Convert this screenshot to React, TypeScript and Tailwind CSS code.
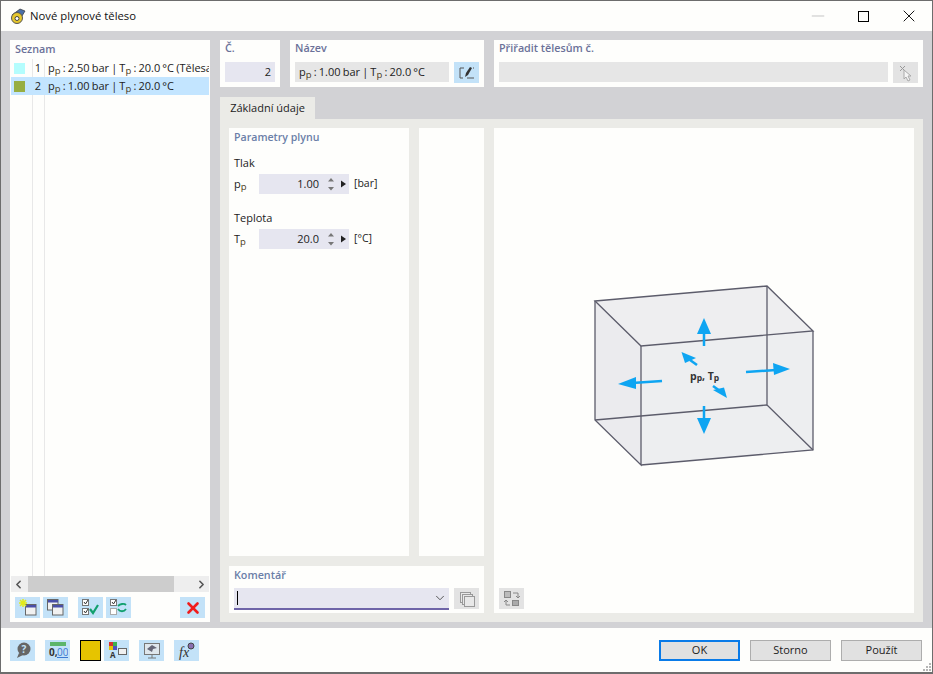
import { ChevronDown, ChevronLeft, ChevronRight, Minus, X } from "lucide-react"
import type { ReactNode } from "react"

const Sub = ({ children }: { children: ReactNode }) => (
  <span className="text-[9.5px] relative top-[2px] text-[#4a3a20]">{children}</span>
)

const IconBtn = ({ children, off }: { children: ReactNode; off?: boolean }) => (
  <div className={`w-[25px] h-[21px] flex items-center justify-center shrink-0 ${off ? "bg-[#e3e3e3]" : "bg-[#c3e2f8]"}`}>
    {children}
  </div>
)

const WinIcon = ({ x, y }: { x: number; y: number }) => (
  <g>
    <rect x={x + 0.5} y={y + 0.5} width="10.5" height="10.5" fill="#f1f1f1" stroke="#666" />
    <rect x={x + 1} y={y + 1} width="10" height="2.5" fill="#4a4fa8" />
  </g>
)

function Spinner({ value, unit }: { value: string; unit: string }) {
  return (
    <div className="flex items-center">
      <div className="w-[90px] h-5 bg-[#e6e6f0] flex items-center text-[#222]">
        <span className="flex-1 text-right text-[11px]">{value}</span>
        <svg width="30" height="20" viewBox="0 0 30 20" className="shrink-0">
          <path d="M9 7.5 12 4 15 7.5Z M9 13 12 16.5 15 13Z" fill="#777" />
          <path d="M22 6.5 27 10 22 13.5Z" fill="#222" />
        </svg>
      </div>
      <span className="ml-[5px] text-[10.5px] text-[#222]">{unit}</span>
    </div>
  )
}

function Arrow({ d, head }: { d: string; head: string }) {
  return (
    <g>
      <path d={d} stroke="#0ea5f2" strokeWidth="2.5" fill="none" />
      <path d={head} fill="#0ea5f2" />
    </g>
  )
}

function Box() {
  return (
    <svg width="250" height="200" viewBox="0 0 250 200">
      <path d="M15 26 187 11 233 56 61 71Z" fill="#eeeef0" />
      <path d="M15 26 61 71 61 190 15 145Z" fill="#ebebee" />
      <path d="M61 71 233 56 233 175 61 190Z" fill="#edeef0" />
      <g stroke="#5c5c6b" strokeWidth="1.3" fill="none">
        <path d="M15 26 187 11 233 56 61 71Z" />
        <path d="M15 26V145L61 190V71" />
        <path d="M61 190 233 175V56" />
        <path d="M187 11V130L233 175" />
        <path d="M15 145 187 130" />
      </g>
      <Arrow d="M124 71V56" head="M124 43 131 59H117Z" />
      <Arrow d="M124 131V146" head="M124 159 117 143H131Z" />
      <Arrow d="M82 106 52 108" head="M38 109 56 102 56 114Z" />
      <Arrow d="M166 97 196 95" head="M210 94 193 88 194 100Z" />
      <Arrow d="M110 85 117 90" head="M101.5 77 116 83 105 88Z" />
      <Arrow d="M133 111 140 116" head="M147 123 133 115 144 112.5Z" />
    </svg>
  )
}

export default function App() {
  return (
    <div
      className="w-[933px] h-[674px] bg-[#fefefc] border border-[#6d6d6d] border-b-[2px] flex flex-col text-[11px] text-[#222] overflow-hidden relative"
      style={{ fontFamily: '"Open Sans", "Noto Sans", sans-serif' }}
    >
      {/* title bar */}
      <div className="h-[30px] flex items-center shrink-0">
        <svg width="18" height="18" viewBox="0 0 18 18" className="ml-[8px] shrink-0">
          <path d="M3 8 11 2 16 4 13 9Z" fill="#4a6fa8" stroke="#333" strokeWidth="0.7" />
          <circle cx="8" cy="11" r="5.5" fill="#e5c62c" stroke="#555" />
          <circle cx="8" cy="11.5" r="2" fill="#fff" stroke="#444" />
        </svg>
        <span className="ml-[3px] text-[11.3px] text-[#111]">Nové plynové těleso</span>
        <div className="ml-auto flex items-center">
          <Minus size={20} strokeWidth={1} className="text-[#bbb] mr-[30px]" />
          <div className="w-[11px] h-[11px] border border-black mr-[30px]" />
          <X size={20} strokeWidth={1.1} className="text-black mr-[13px]" />
        </div>
      </div>

      <div className="h-[597px] bg-[#d2d2d5] flex pl-[9px] pr-[9px] pt-[9px] pb-[6px] gap-[10px] shrink-0">
        {/* list */}
        <div className="w-[200px] bg-[#fefefc] flex flex-col">
          <div className="h-[19px] px-[5px] text-[10.75px] leading-[18px] font-semibold text-[#6b7199]">Seznam</div>
          <div className="flex-1 mx-[1px] relative overflow-hidden">
            <div className="absolute left-[21px] top-0 bottom-0 w-px bg-[#e8e8e8]" />
            <div className="absolute left-[33px] top-0 bottom-0 w-px bg-[#e8e8e8]" />
            <div className="h-[18px] flex items-center whitespace-nowrap relative pt-[1px]">
              <div className="ml-[3px] w-[11px] h-[11px] bg-[#b4fdfd] shrink-0" />
              <span className="ml-[6px] w-[10px] text-right shrink-0">1</span>
              <span className="ml-[7px] [word-spacing:-0.7px]">p<Sub>p</Sub> : 2.50 bar | T<Sub>p</Sub> : 20.0 °C (Tělesa</span>
            </div>
            <div className="h-[18px] flex items-center whitespace-nowrap bg-[#c3e5ff] relative pt-[1px]">
              <div className="ml-[3px] w-[11px] h-[11px] bg-[#97ae42] shrink-0" />
              <span className="ml-[6px] w-[10px] text-right shrink-0">2</span>
              <span className="ml-[7px] [word-spacing:-0.7px]">p<Sub>p</Sub> : 1.00 bar | T<Sub>p</Sub> : 20.0 °C</span>
            </div>
          </div>
          <div className="h-4 mx-[1px] bg-[#eeeeee] flex items-center justify-between relative shrink-0">
            <ChevronLeft size={13} strokeWidth={3} className="text-[#555] ml-[1px]" />
            <div className="absolute left-[17px] w-[146px] top-0 bottom-0 bg-[#cdcdcd]" />
            <ChevronRight size={13} strokeWidth={3} className="text-[#555] mr-[1px]" />
          </div>
          <div className="h-[30px] pl-[5px] pr-[5px] flex items-center pt-[1px]">
            <IconBtn>
              <svg width="21" height="19" viewBox="0 0 21 19">
                <WinIcon x={8} y={6} />
                <path d="M6 1V9M2 5H10M3 2 9 8M9 2 3 8" stroke="#e2ea1c" strokeWidth="1.6" />
              </svg>
            </IconBtn>
            <div className="w-[3px]" />
            <IconBtn>
              <svg width="21" height="19" viewBox="0 0 21 19">
                <WinIcon x={2} y={1} />
                <WinIcon x={7} y={6} />
              </svg>
            </IconBtn>
            <div className="w-[10px]" />
            <IconBtn>
              <svg width="21" height="19" viewBox="0 0 21 19">
                <rect x="2.5" y="1.5" width="6" height="6" fill="#fff" stroke="#777" />
                <rect x="2.5" y="10.5" width="6" height="6" fill="#fff" stroke="#777" />
                <path d="M4 4 5.5 6 8 2M4 13 5.5 15 8 11" stroke="#333" fill="none" />
                <path d="M10 11 13 15 18 7" stroke="#12a06e" strokeWidth="2.2" fill="none" />
              </svg>
            </IconBtn>
            <div className="w-[3px]" />
            <IconBtn>
              <svg width="21" height="19" viewBox="0 0 21 19">
                <rect x="2.5" y="1.5" width="6" height="6" fill="#fff" stroke="#777" />
                <rect x="2.5" y="10.5" width="6" height="6" fill="#fff" stroke="#aaa" />
                <path d="M4 4 5.5 6 8 2" stroke="#333" fill="none" />
                <path d="M10 8C12 6 16 5 18 7M18 11C16 14 12 14 10 11" stroke="#12a06e" strokeWidth="1.8" fill="none" />
              </svg>
            </IconBtn>
            <div className="ml-auto">
              <IconBtn>
                <X size={18} strokeWidth={3.5} className="text-[#f01c1c]" />
              </IconBtn>
            </div>
          </div>
        </div>

        {/* right side */}
        <div className="flex-1 flex flex-col min-w-0">
          <div className="h-[47px] flex gap-[10px] shrink-0">
            <div className="w-[60px] bg-[#fefefc] px-[5px]">
              <div className="h-[22px] text-[10.75px] leading-[16px] font-semibold text-[#6b7199]">Č.</div>
              <div className="h-5 bg-[#e6e6f0] flex items-center justify-end pr-1">2</div>
            </div>
            <div className="w-[194px] bg-[#fefefc] px-[5px]">
              <div className="h-[22px] text-[10.75px] leading-[16px] font-semibold text-[#6b7199]">Název</div>
              <div className="flex gap-[5px]">
                <div className="w-[154px] h-5 bg-[#e6e6e6] flex items-center pl-[4px] whitespace-nowrap">
                  <span className="[word-spacing:-0.7px]">p<Sub>p</Sub> : 1.00 bar | T<Sub>p</Sub> : 20.0 °C</span>
                </div>
                <div className="w-[25px] h-[21px] bg-[#c3e2f8] flex items-center justify-center">
                  <svg width="18" height="16" viewBox="0 0 18 16" fill="none">
                    <path d="M6 3H2V13H5M9 13H16M15 3H16" stroke="#555" />
                    <path d="M7 12 8 8 12 2 14 3 10 10Z" fill="#333" />
                  </svg>
                </div>
              </div>
            </div>
            <div className="flex-1 bg-[#fefefc] px-[5px]">
              <div className="h-[22px] text-[10.75px] leading-[16px] font-semibold text-[#6b7199]">Přiřadit tělesům č.</div>
              <div className="flex gap-[5px]">
                <div className="flex-1 h-5 bg-[#e6e6e6]" />
                <div className="w-[25px] h-[21px] bg-[#e3e3e3] flex items-center justify-center">
                  <svg width="16" height="18" viewBox="0 0 16 18" fill="none">
                    <path d="M2 2 7 7M7 2 2 7" stroke="#999" />
                    <path d="M6 6V15L8 13 10 17 12 16 10 12H13Z" fill="#f5f5f5" stroke="#aaa" />
                  </svg>
                </div>
              </div>
            </div>
          </div>

          <div className="h-[22px] mt-[10px] flex shrink-0">
            <div className="w-[95px] bg-[#ebebe7] flex items-center justify-center text-[11px] text-[#222]">Základní údaje</div>
          </div>

          <div className="flex-1 bg-[#ebebe7] p-[9px] flex gap-[10px]">
            <div className="w-[255px] flex flex-col gap-[10px]">
              <div className="flex-1 flex gap-[10px]">
                <div className="w-[180px] bg-[#fefefc] px-[5px]">
                  <div className="h-[20px] text-[10.6px] leading-[18px] font-semibold text-[#6b7fa8]">Parametry plynu</div>
                  <div className="mt-[6px] h-[18px] leading-[18px]">Tlak</div>
                  <div className="mt-[2px] flex items-center">
                    <span className="w-[25px]">p<Sub>p</Sub></span>
                    <Spinner value="1.00" unit="[bar]" />
                  </div>
                  <div className="mt-[15px] h-[18px] leading-[18px]">Teplota</div>
                  <div className="mt-[2px] flex items-center">
                    <span className="w-[25px]">T<Sub>p</Sub></span>
                    <Spinner value="20.0" unit="[°C]" />
                  </div>
                </div>
                <div className="w-[65px] bg-[#fefefc]" />
              </div>
              <div className="h-[47px] bg-[#fefefc] px-[5px] shrink-0">
                <div className="h-[22px] text-[10.75px] leading-[18px] font-semibold text-[#6b7fa8]">Komentář</div>
                <div className="flex gap-[5px]">
                  <div className="w-[215px] h-[22px] bg-[#e6e6f0] border-b-2 border-[#6e64a8] flex items-center justify-between">
                    <div className="ml-[3px] w-px h-[14px] bg-black" />
                    <ChevronDown size={14} strokeWidth={1.5} className="text-[#444] mr-[2px]" />
                  </div>
                  <IconBtn off>
                    <svg width="18" height="18" viewBox="0 0 18 18" fill="#e8e8e8" stroke="#999">
                      <rect x="2.5" y="2.5" width="10" height="10" />
                      <rect x="4.5" y="4.5" width="10" height="10" />
                      <rect x="6.5" y="6.5" width="10" height="10" />
                    </svg>
                  </IconBtn>
                </div>
              </div>
            </div>

            <div className="flex-1 bg-[#fefefc] flex flex-col px-[5px] pb-[4px]">
              <div className="flex-1 flex justify-center pt-[147px] pl-[2px]">
                <div className="relative w-[250px] h-[200px]">
                  <Box />
                  <div className="absolute left-[110px] top-[94px] text-[10.5px] font-bold text-[#333] whitespace-nowrap">
                    p<span className="text-[8.5px] relative top-[1px]">p</span>, T<span className="text-[8.5px] relative top-[1px]">p</span>
                  </div>
                </div>
              </div>
              <IconBtn off>
                <svg width="18" height="18" viewBox="0 0 18 18" fill="none" stroke="#888">
                  <rect x="1.5" y="1.5" width="6" height="6" fill="#bbb" />
                  <rect x="9.5" y="10.5" width="6" height="5" fill="#aaa" />
                  <path d="M10 3H15V8M13 6 15 8 17 6M7 15H3V10M1 12 3 10 5 12" />
                </svg>
              </IconBtn>
            </div>
          </div>
        </div>
      </div>

      {/* bottom bar */}
      <div className="flex-1 flex items-center pl-[9px] pr-[10px]">
        <IconBtn>
          <svg width="20" height="18" viewBox="0 0 20 18">
            <circle cx="11" cy="8" r="6.5" fill="#666" />
            <path d="M6 12 4 17 10 14Z" fill="#666" />
            <text x="11" y="11.5" fontSize="10" fontWeight="700" textAnchor="middle" fill="#c3e2f8">?</text>
          </svg>
        </IconBtn>
        <div className="w-[10px]" />
        <IconBtn>
          <svg width="21" height="19" viewBox="0 0 21 19">
            <rect x="3" y="1" width="16" height="4" fill="#5cb56a" />
            <text x="2" y="15" fontSize="10" fontWeight="700" fill="#333">0,</text>
            <text x="10" y="15" fontSize="10" fontWeight="400" fill="#3a78d0" textDecoration="underline">00</text>
          </svg>
        </IconBtn>
        <div className="w-[10px]" />
        <div className="w-[21px] h-[21px] bg-[#e6c400] border border-black shrink-0" />
        <div className="w-[3px]" />
        <IconBtn>
          <svg width="21" height="19" viewBox="0 0 21 19">
            <rect x="3" y="1" width="4" height="4" fill="#d83030" />
            <rect x="7" y="1" width="4" height="4" fill="#3cb050" />
            <rect x="3" y="5" width="4" height="4" fill="#e6c400" />
            <rect x="7" y="5" width="4" height="4" fill="#5050c0" />
            <rect x="12.5" y="7.5" width="8" height="6" fill="#f0f0f0" stroke="#666" />
            <text x="4" y="16.5" fontSize="8" fontWeight="700" fill="#333">A</text>
          </svg>
        </IconBtn>
        <div className="w-[10px]" />
        <IconBtn>
          <svg width="20" height="19" viewBox="0 0 20 19" fill="none">
            <rect x="2.5" y="2.5" width="15" height="11" fill="#dfe6ec" stroke="#777" />
            <path d="M5 8 10 4 15 7 11 8 10 11Z" fill="#667" />
            <path d="M10 14V17M6 17H14" stroke="#777" />
          </svg>
        </IconBtn>
        <div className="w-[10px]" />
        <IconBtn>
          <svg width="21" height="19" viewBox="0 0 21 19">
            <text x="3" y="16" fontSize="14" fontStyle="italic" fontFamily='"Liberation Serif", serif' fill="#333">fx</text>
            <circle cx="15" cy="5" r="3" fill="#8a6fb0" stroke="#444" />
          </svg>
        </IconBtn>
        <div className="ml-auto flex gap-[10px]">
          <button className="w-[81px] h-[21px] bg-[#e1e1e1] border-2 border-[#0a7be8] text-[11px]">OK</button>
          <button className="w-[81px] h-[21px] bg-[#e1e1e1] border border-[#adadad] text-[11px]">Storno</button>
          <button className="w-[81px] h-[21px] bg-[#e1e1e1] border border-[#adadad] text-[11px]">Použít</button>
        </div>
      </div>
      <svg width="9" height="9" viewBox="0 0 9 9" className="absolute right-0 bottom-0" fill="#b5b5b5">
        <rect x="6" y="0" width="2" height="2" />
        <rect x="3" y="3" width="2" height="2" />
        <rect x="6" y="3" width="2" height="2" />
        <rect x="0" y="6" width="2" height="2" />
        <rect x="3" y="6" width="2" height="2" />
        <rect x="6" y="6" width="2" height="2" />
      </svg>
    </div>
  )
}
